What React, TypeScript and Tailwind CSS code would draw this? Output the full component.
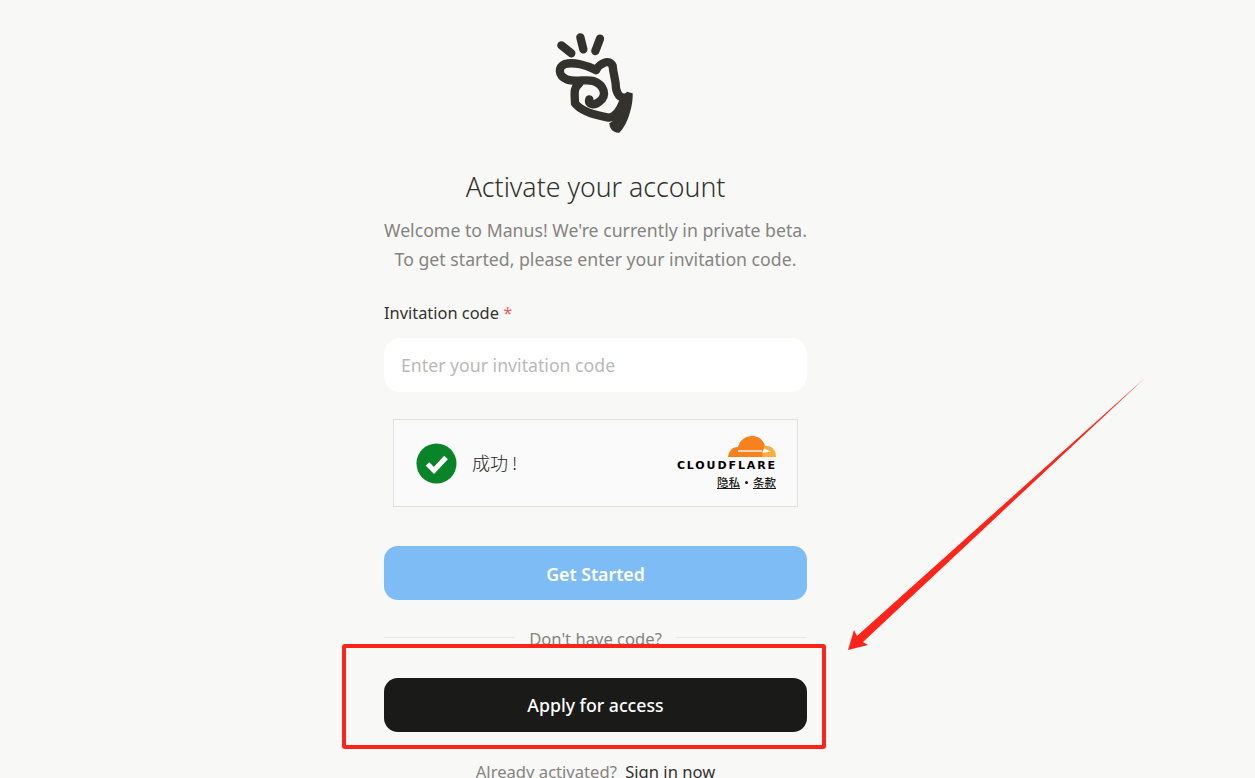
function ManusLogo() {
  return (
    <svg className="-translate-x-[1px]" width="130" height="125" viewBox="0 0 390 375" fill="none" stroke="#34322d" strokeWidth="25" strokeLinecap="round" strokeLinejoin="round">
      <path d="M94 76 L124 100" />
      <path d="M151 52 L160 88" />
      <path d="M210 56 L196 93" />
      <path d="M198 150 C210 130 238 115 248 138 C250 165 258 180 258 205 C262 228 275 238 292 230" />
      <path d="M198 150 C170 135 130 125 105 132 C82 140 85 168 110 178 C135 188 170 176 190 183 C224 195 232 228 208 245 C195 257 172 255 178 238" />
      <path d="M148 190 C128 205 135 225 135 250 C150 270 190 285 235 293 C255 293 270 270 280 245" />
      <path d="M290 215 L308 220 C310 260 290 320 268 338 C250 340 238 325 238 310 C265 295 280 260 290 215 Z" fill="#34322d" stroke="none" />
    </svg>
  )
}

function CloudflareLogo() {
  return (
    <svg width="48" height="22" viewBox="0 0 48 22">
      <path d="M0 21 C1 14 5 11 10 11 C12 4 17 0 24 0 C30 0 35 3 37 10 L37 21 Z" fill="#f6821f" />
      <path d="M34 21 L36 10 C43 9 48 14 48 21 Z" fill="#fbad41" />
      <path d="M10 15 L34 15" stroke="#fafafa" strokeWidth="1.4" />
      <path d="M36 12.5 L43 15.5 L34 17 Z" fill="#fafafa" />
    </svg>
  )
}

function TurnstileBox() {
  return (
    <div className="ml-[9px] flex h-[88px] w-[405px] items-center justify-between border border-[#e0e0e0] bg-[#fafafa] pl-[22px] pr-[21px]">
      <div className="flex items-center gap-[15px]">
        <svg width="41" height="41" viewBox="0 0 41 41">
          <circle cx="20.5" cy="20.5" r="20" fill="#0a8428" />
          <path d="M11.5 21 L18 27.5 L30 14.5" fill="none" stroke="#fff" strokeWidth="5" />
        </svg>
        <span className="pb-[2px] font-['Noto_Sans_CJK_SC',sans-serif] text-[18px] font-light text-[#232323]">
          成功<span className="ml-[4px]">!</span>
        </span>
      </div>
      <div className="flex flex-col items-end">
        <div className="-mt-[1px]">
          <CloudflareLogo />
        </div>
        <span className="mt-[1px] -mr-[1px] font-['DejaVu_Sans',sans-serif] text-[11px] leading-[13px] font-bold tracking-[1.9px] text-black">CLOUDFLARE</span>
        <div className="mt-[3px] flex items-center font-['Noto_Sans_CJK_SC',sans-serif] text-[11.5px] leading-[14px] font-medium text-[#1a1a1a]">
          <a className="underline">隐私</a>
          <span className="mx-[5px] h-[3px] w-[3px] rounded-full bg-[#1a1a1a]" />
          <a className="underline">条款</a>
        </div>
      </div>
    </div>
  )
}

export default function App() {
  return (
    <div className="relative h-[778px] w-[1255px] overflow-hidden bg-[#f8f8f7] pl-[384px] font-['Noto_Sans',sans-serif]">
      <div className="flex w-[423px] flex-col">
        <div className="flex justify-center pt-[20px]">
          <ManusLogo />
        </div>
        <h1 className="mt-[24px] text-center text-[26.7px] leading-[36px] font-light text-[#34322d]">Activate your account</h1>
        <p className="mt-[11px] text-center text-[17.7px] leading-[29px] text-[#858481]">
          Welcome to Manus! We're currently in private beta.
          <br />
          To get started, please enter your invitation code.
        </p>
        <label className="mt-[26px] text-[16.4px] leading-[26px] text-[#34322d]">
          Invitation code <span className="text-[#f25a5a]">*</span>
        </label>
        <input
          placeholder="Enter your invitation code"
          className="mt-[12px] h-[54px] w-full rounded-[16px] bg-white px-[17px] text-[17.7px] outline-none placeholder:text-[#b9b9b7]"
        />
        <div className="mt-[27px]">
          <TurnstileBox />
        </div>
        <button className="mt-[39px] h-[54px] w-full rounded-[14px] bg-[#7dbcf5] pt-[2px] text-[17.7px] font-semibold text-white">Get Started</button>
        <div className="mt-[25px] flex h-[24px] items-center gap-[14px]">
          <div className="h-px flex-1 bg-[#e8e8e6]" />
          <span className="pt-[4px] text-[16.6px] text-[#858481]">Don't have code?</span>
          <div className="h-px flex-1 bg-[#e8e8e6]" />
        </div>
        <button className="mt-[29px] h-[54px] w-full rounded-[14px] bg-[#1a1a19] text-[17.7px] font-medium text-white">Apply for access</button>
        <p className="mt-[28px] text-center text-[16.6px] leading-[24px] text-[#858481]">
          Already activated? <span className="ml-[4px] text-[#34322d]">Sign in now</span>
        </p>
      </div>

      {/* annotations drawn over the page */}
      <div className="absolute top-[644px] left-[342px] h-[105px] w-[484px] rounded-[3px] border-[4px] border-[#ff2419]" />
      <svg className="absolute top-0 left-0" width="1255" height="778" viewBox="0 0 1255 778">
        <polygon points="848,650 854,630 857,636 1146,377 863,642 868,645" fill="#ff2419" />
      </svg>
    </div>
  )
}
